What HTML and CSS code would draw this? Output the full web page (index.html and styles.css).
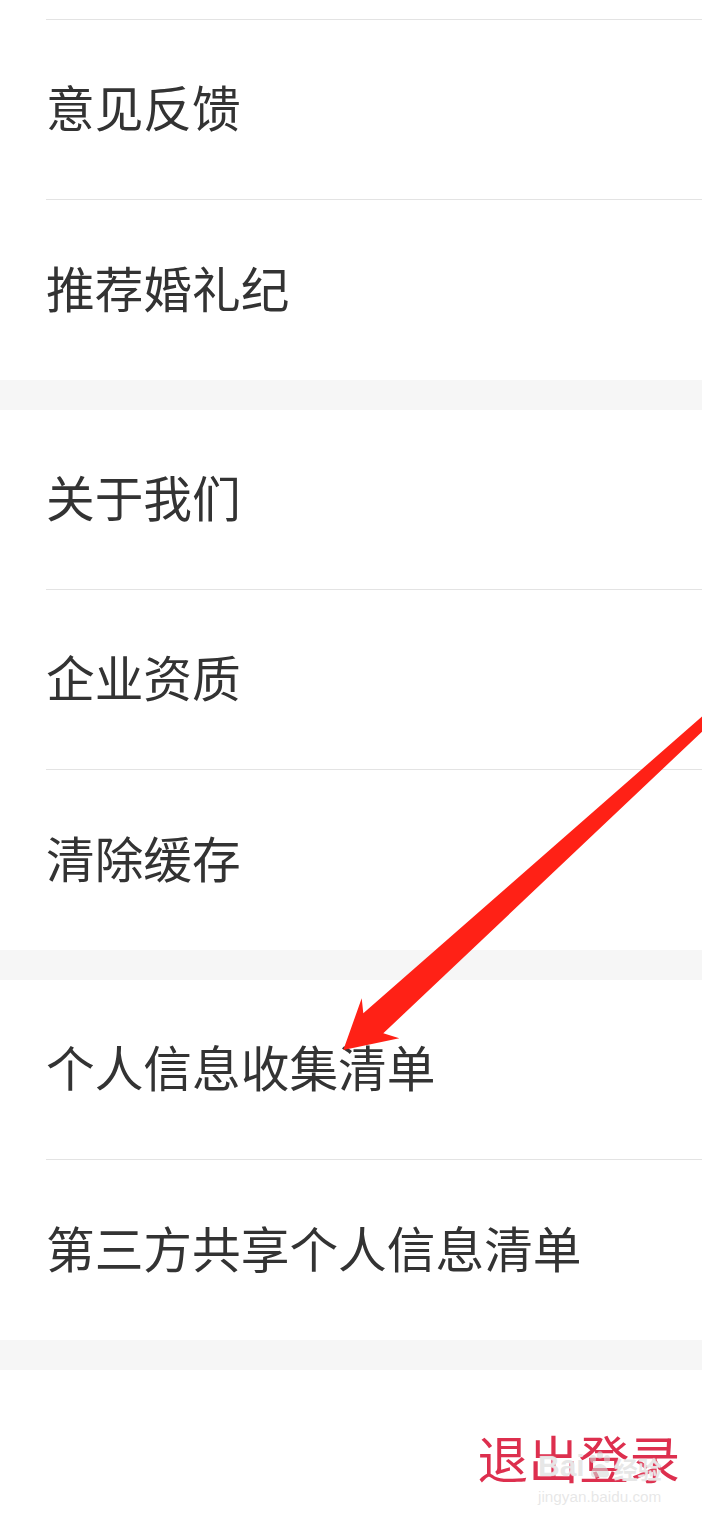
FILE: index.html
```html
<!DOCTYPE html>
<html lang="zh-CN">
<head>
    <meta charset="UTF-8">
    <meta name="viewport" content="width=device-width, initial-scale=1.0">
    <title>设置</title>
    <link rel="stylesheet" href="styles.css">
</head>
<body>

<div class="page">
    <div class="group">
        <div class="item cut"></div>
        <div class="item">意见反馈</div>
        <div class="item">推荐婚礼纪</div>
    </div>
    <div class="group">
        <div class="item">关于我们</div>
        <div class="item">企业资质</div>
        <div class="item">清除缓存</div>
    </div>
    <div class="group">
        <div class="item">个人信息收集清单</div>
        <div class="item">第三方共享个人信息清单</div>
    </div>
    <div class="group logout">
        <div class="logout-btn">退出登录</div>
    </div>

    <!-- 标注箭头 -->
    <svg class="arrow" width="702" height="1519" viewBox="0 0 702 1519">
        <polygon fill="#ff2116" points="702,716.5 363.3,1013.3 361.7,998.3 343.3,1050 399.3,1038.3 383.3,1033.3 702,731.7"/>
    </svg>

    <div class="watermark">
        <div class="wm-logo">
            <span class="wm-bai">Bai</span>
            <svg class="wm-paw" width="26" height="28" viewBox="0 0 26 28">
                <ellipse cx="6" cy="8" rx="3" ry="4"/>
                <ellipse cx="13" cy="4" rx="3" ry="3.8"/>
                <ellipse cx="20" cy="8" rx="3" ry="4"/>
                <path d="M13 13c-5 0-9 6-9 10 0 3 3 4 5 3.5 2-.5 6-.5 8 0 2 .5 5-.5 5-3.5 0-4-4-10-9-10z"/>
            </svg>
            <span class="wm-jy">经验</span>
        </div>
        <div class="wm-url">jingyan.baidu.com</div>
    </div>
</div>

</body>
</html>
```

FILE: styles.css
```css
body {
    margin: 0;
    background-color: #f6f6f6;
    font-family: "Noto Sans CJK SC", "Noto Sans", sans-serif;
    color: #333;
}
.page {
    position: relative;
    width: 702px;
    height: 1519px;
    overflow: hidden;
}
.group {
    background-color: #ffffff;
    margin-bottom: 30px;
}
.item {
    margin-left: 46px;
    height: 180px;
    padding-bottom: 6px;
    display: flex;
    align-items: center;
    font-size: 48.7px;
    line-height: 1;
    border-bottom: 1px solid #e3e3e3;
    box-sizing: border-box;
}
.item:last-child {
    border-bottom: none;
}
.item.cut {
    height: 20px;
    padding-bottom: 0;
}
.logout {
    height: 180px;
    padding-bottom: 6px;
    box-sizing: border-box;
    display: flex;
    align-items: center;
    justify-content: flex-end;
    padding-right: 22px;
}
.logout-btn {
    font-size: 50.6px;
    line-height: 1;
    color: #dd2f4e;
}
.arrow {
    position: absolute;
    left: 0;
    top: 0;
}
.watermark {
    position: absolute;
    left: 538px;
    top: 1441px;
    color: rgba(215, 215, 215, 0.6);
    text-shadow: 0 0 1px #fff;
}
.wm-logo {
    display: flex;
    align-items: flex-end;
    height: 40px;
}
.wm-bai {
    font-family: "Liberation Sans", Arial, sans-serif;
    font-weight: bold;
    font-size: 30px;
    line-height: 1;
}
.wm-paw {
    fill: rgba(215, 215, 215, 0.6);
    margin: 0 1px 2px 2px;
}
.wm-jy {
    font-size: 24px;
    line-height: 1;
    font-weight: bold;
}
.wm-url {
    margin-top: 8px;
    font-family: "Liberation Sans", Arial, sans-serif;
    font-size: 15.3px;
    line-height: 1;
}
```
